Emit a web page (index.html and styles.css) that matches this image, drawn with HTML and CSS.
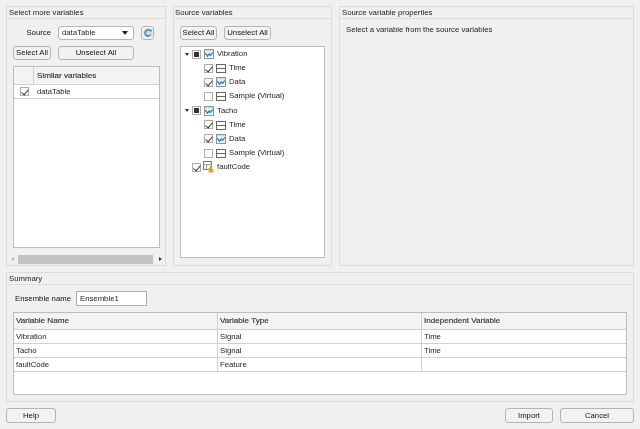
FILE: index.html
```html
<!DOCTYPE html>
<html lang="en">
<head>
<meta charset="utf-8">
<title>Ensemble import</title>
<link rel="stylesheet" href="styles.css">
</head>
<body>
<svg class="defs" width="0" height="0" aria-hidden="true">
  <symbol id="sig" viewBox="0 0 10 10">
    <rect x="0.5" y="0.5" width="9" height="9" fill="#fff" stroke="#8a95a0"/>
    <rect x="1" y="1" width="8" height="1.5" fill="#cfd8e2"/>
    <path d="M1.2 4 L3.5 7.2 L5.2 5 L6.6 6.4 L8.8 3.4" fill="none" stroke="#2a8fd8" stroke-width="1.5"/>
  </symbol>
  <symbol id="tbl" viewBox="0 0 10 10">
    <rect x="0.5" y="1.5" width="9" height="8" fill="#fff" stroke="#666"/>
    <path d="M0.5 5.5 H9.5" stroke="#666"/>
  </symbol>
  <symbol id="feat" viewBox="0 0 12 12">
    <rect x="0.5" y="0.5" width="8" height="8" fill="#fff" stroke="#777"/>
    <path d="M0.5 3.5 H8.5 M3.5 3.5 V8.5" stroke="#999"/>
    <rect x="5.5" y="7" width="1.5" height="4.5" fill="#e6b84a"/>
    <rect x="7" y="5" width="2" height="6.5" fill="#c9982e"/>
    <rect x="9" y="8" width="2" height="3.5" fill="#efcb70"/>
  </symbol>
</svg>
<div class="dialog">
  <div class="top">
    <section class="panel">
      <h2 class="title">Select more variables</h2>
      <div class="body left">
        <div class="source-row">
          <span class="source-label">Source</span>
          <div class="drop"><span>dataTable</span><i class="caret"></i></div>
          <button class="refresh" aria-label="Refresh">
            <svg width="10" height="10" viewBox="0 0 10 10"><circle cx="5" cy="5" r="4.7" fill="#d5dde4"/><path d="M7.4 3 A3 3 0 1 0 7.6 6.6" fill="none" stroke="#4f8fc4" stroke-width="1.7"/><path d="M5.8 1.4 L8.6 1.4 L8.6 4.2 Z" fill="#4f8fc4"/></svg>
          </button>
        </div>
        <div class="btn-row split">
          <button class="btn all-l">Select All</button>
          <button class="btn unsel-l">Unselect All</button>
        </div>
        <div class="sim-table">
          <div class="sim-head"><div class="sim-c1"></div><div class="sim-c2">Similar variables</div></div>
          <div class="sim-row"><div class="sim-c1"><span class="cb on"></span></div><div class="sim-c2">dataTable</div></div>
        </div>
        <div class="hscroll">
          <i class="arr-l"></i><div class="thumb"></div><i class="arr-r"></i>
        </div>
      </div>
    </section>

    <section class="panel">
      <h2 class="title mid-title">Source variables</h2>
      <div class="body mid">
        <div class="btn-row mid-btns">
          <button class="btn all-m">Select All</button>
          <button class="btn unsel-m">Unselect All</button>
        </div>
        <div class="tree">
          <div class="node"><i class="tw"></i><span class="cb mixed"></span><svg class="ic"><use href="#sig"/></svg>Vibration</div>
          <div class="node sub"><span class="cb on"></span><svg class="ic"><use href="#tbl"/></svg>Time</div>
          <div class="node sub"><span class="cb on"></span><svg class="ic"><use href="#sig"/></svg>Data</div>
          <div class="node sub"><span class="cb"></span><svg class="ic"><use href="#tbl"/></svg>Sample (Virtual)</div>
          <div class="node"><i class="tw"></i><span class="cb mixed"></span><svg class="ic"><use href="#sig"/></svg>Tacho</div>
          <div class="node sub"><span class="cb on"></span><svg class="ic"><use href="#tbl"/></svg>Time</div>
          <div class="node sub"><span class="cb on"></span><svg class="ic"><use href="#sig"/></svg>Data</div>
          <div class="node sub"><span class="cb"></span><svg class="ic"><use href="#tbl"/></svg>Sample (Virtual)</div>
          <div class="node leaf"><span class="cb on"></span><svg class="ic feat"><use href="#feat"/></svg>faultCode</div>
        </div>
      </div>
    </section>

    <section class="panel">
      <h2 class="title">Source variable properties</h2>
      <div class="body"><p class="hint">Select a variable from the source variables</p></div>
    </section>
  </div>

  <section class="panel summary">
    <h2 class="title">Summary</h2>
    <div class="body sum-body">
      <div class="name-row">
        <label class="name-label">Ensemble name</label>
        <div class="input">Ensemble1</div>
      </div>
      <div class="grid-table">
        <div class="g-row g-head"><div>Variable Name</div><div>Variable Type</div><div>Independent Variable</div></div>
        <div class="g-row"><div>Vibration</div><div>Signal</div><div>Time</div></div>
        <div class="g-row"><div>Tacho</div><div>Signal</div><div>Time</div></div>
        <div class="g-row"><div>faultCode</div><div>Feature</div><div></div></div>
      </div>
    </div>
  </section>

  <div class="footer">
    <button class="btn help">Help</button>
    <div class="right-btns">
      <button class="btn import">Import</button>
      <button class="btn cancel">Cancel</button>
    </div>
  </div>
</div>
</body>
</html>
```
FILE: styles.css
```css
* { box-sizing: border-box; }
html, body { margin: 0; height: 100%; }
body {
  width: 640px;
  height: 429px;
  overflow: hidden;
  background: #f0f0f0;
  font: 7.75px/12px "Liberation Sans", Arial, sans-serif;
  color: #1c1c1c;
}
.defs { position: absolute; }
.dialog { padding: 6px; height: 429px; display: flex; flex-direction: column; filter: blur(0.25px); }
.top { display: grid; grid-template-columns: 160px 159px 295px; column-gap: 7px; height: 260px; }
.panel { border: 1px solid #dcdcdc; display: flex; flex-direction: column; min-width: 0; }
.title {
  margin: 0;
  height: 12px;
  padding: 0 2px;
  font: inherit;
  line-height: 11px;
  color: #1c1c1c;
  border-bottom: 1px solid #dcdcdc;
  flex: none;
}
.mid-title { padding-left: 1px; }
.body { flex: 1; min-height: 0; }

button {
  font: inherit;
  color: #111;
  padding: 0;
  background: #f2f2f2;
  border: 1px solid #b4b4b4;
  border-radius: 3px;
  white-space: nowrap;
}
.btn { height: 14px; line-height: 12px; }

.left { padding: 7px 6px 0 6px; display: flex; flex-direction: column; }
.source-row { display: flex; align-items: center; height: 14px; }
.source-label { width: 38px; text-align: right; margin-right: 7px; color: #111; }
.drop {
  width: 76px; height: 14px;
  background: #fff;
  border: 1px solid #b4b4b4; border-radius: 3px;
  padding: 0 3px; display: flex; align-items: center; justify-content: space-between;
}
.caret { width: 0; height: 0; border: 3px solid transparent; border-top: 4px solid #222; border-bottom: 0; margin-right: 2px; }
.refresh { width: 13px; height: 14px; margin-left: 7px; display: flex; align-items: center; justify-content: center; }
.btn-row { display: flex; height: 14px; flex: none; }
.split { margin-top: 6px; gap: 7px; }
.all-l { width: 38px; }
.unsel-l { width: 76px; }
.sim-table {
  margin-top: 6px; height: 182px; width: 147px; flex: none;
  background: #fff; border: 1px solid #bdbdbd;
}
.sim-head, .sim-row { display: flex; }
.sim-head { height: 18px; background: #f3f3f3; border-bottom: 1px solid #d0d0d0; color: #333; line-height: 17px; font-size: 8.1px; }
.sim-head .sim-c2 { -webkit-text-stroke: 0.15px #333; }
.sim-row { height: 14px; border-bottom: 1px solid #d0d0d0; line-height: 13px; }
.sim-c1 { width: 20px; border-right: 1px solid #d0d0d0; display: flex; align-items: center; justify-content: center; flex: none; }
.sim-row .sim-c1 { border-right: 0; }
.sim-c2 { padding-left: 3px; }
.hscroll { margin: 6px 0 0 -3px; height: 10px; width: 152px; flex: none; display: flex; align-items: center; padding-left: 1px; }
.thumb { width: 135px; height: 9px; margin: 0 6px 0 4px; background: #c2c2c2; }
.arr-l { width: 0; height: 0; border: 2.5px solid transparent; border-right: 3px solid #bbb; border-left: 0; }
.arr-r { width: 0; height: 0; border: 2.5px solid transparent; border-left: 3px solid #333; border-right: 0; }

.cb {
  display: inline-block; position: relative; flex: none;
  width: 9px; height: 9px;
  background: #fff; border: 1px solid #adadad;
}
.cb.on::after {
  content: ""; position: absolute; left: 2px; top: 0;
  width: 3px; height: 6px;
  border: solid #333; border-width: 0 1px 1px 0;
  transform: rotate(40deg);
}
.cb.mixed::after {
  content: ""; position: absolute; left: 1px; top: 1px; width: 5px; height: 5px; background: #333;
}

.mid { padding: 7px 6px 0 6px; display: flex; flex-direction: column; }
.mid-btns { gap: 7px; }
.all-m { width: 37px; }
.unsel-m { width: 47px; }
.tree {
  margin-top: 6px; height: 212px; width: 145px; flex: none;
  background: #fff; border: 1px solid #bdbdbd;
}
.node { height: 14.15px; display: flex; align-items: center; padding-left: 4px; white-space: nowrap; }
.tw { width: 0; height: 0; border: 2.5px solid transparent; border-top: 3px solid #333; border-bottom: 0; margin-right: 3px; }
.node.sub { padding-left: 23px; }
.node.leaf { padding-left: 11px; }
.ic { width: 10px; height: 10px; margin: 0 3px; flex: none; }
.ic.feat { width: 12px; height: 12px; margin: 0 2px 0 2px; }

.hint { margin: 0; padding: 5px 0 0 6px; }

.summary { margin-top: 6px; height: 130px; flex: none; }
.sum-body { padding: 6px 6px 0 6px; }
.name-row { display: flex; align-items: center; height: 15px; }
.name-label { padding-left: 2px; width: 63px; color: #111; white-space: nowrap; }
.input { width: 71px; height: 15px; background: #fff; border: 1px solid #adadad; padding-left: 3px; line-height: 13px; }
.grid-table {
  margin-top: 6px; height: 83px; width: 614px;
  background: #fff; border: 1px solid #bdbdbd;
}
.g-row { display: grid; grid-template-columns: 204px 204px 1fr; height: 14px; border-bottom: 1px solid #d0d0d0; line-height: 13px; }
.g-row > div { padding-left: 2px; border-right: 1px solid #d0d0d0; }
.g-row > div:last-child { border-right: 0; }
.g-head { height: 17px; background: #f3f3f3; line-height: 16px; color: #333; font-size: 8.1px; -webkit-text-stroke: 0.15px #333; }

.footer { margin-top: 6px; display: flex; justify-content: space-between; }
.right-btns { display: flex; gap: 7px; }
.help { width: 50px; }
.import { width: 48px; }
.cancel { width: 74px; }
.footer .btn { height: 15px; }
```
